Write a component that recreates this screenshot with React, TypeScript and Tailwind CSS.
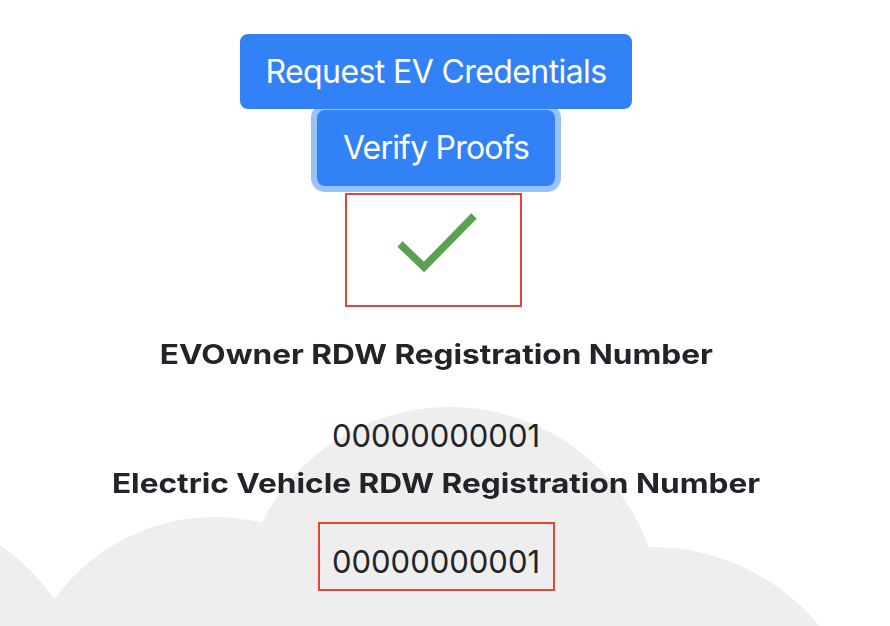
import React from 'react'

function Cloud() {
  return (
    <svg className="absolute inset-0 h-full w-full" viewBox="0 0 890 626" preserveAspectRatio="none" aria-hidden>
      <g fill="#eeeeee">
        <circle cx="-120" cy="720" r="212" />
        <circle cx="215" cy="715" r="198" />
        <circle cx="450" cy="618" r="211" />
        <circle cx="652" cy="764" r="217" />
      </g>
    </svg>
  )
}

function Check() {
  return (
    <svg width="173" height="110" viewBox="0 0 173 110" className="blur-[0.4px]">
      <polyline points="53,49 77,72 127,21" fill="none" stroke="#5aa152" strokeWidth="7.5" strokeLinejoin="miter" />
    </svg>
  )
}

export default function App() {
  return (
    <div className="relative h-[626px] w-[890px] overflow-hidden bg-white font-['Inter',sans-serif] text-[#212529]">
      <Cloud />
      <div className="relative flex flex-col items-center pr-[18px] pt-[34px]">
        <button className="relative z-10 h-[75px] rounded-[8px] border-2 border-[#3381f6] bg-[#3381f6] px-[24px] text-[32px] leading-[48px] tracking-[-0.6px] text-white">
          Request EV Credentials
        </button>
        <button className="mt-[1px] h-[76px] rounded-[8px] border-2 border-[#3381f6] bg-[#3381f6] px-[24px] text-[32px] leading-[48px] tracking-[-0.8px] text-white shadow-[0_0_0_6px_#99c1fa]">
          Verify Proofs
        </button>
        <div className="mr-[5px] mt-[7px] h-[114px] w-[177px] border-2 border-[#ea4331]">
          <Check />
        </div>
        <h5 className="mt-[32px] scale-x-[1.17] text-[27px] font-bold leading-[32px]">EVOwner RDW Registration Number</h5>
        <p className="mt-[41px] text-[31px] leading-[48px]">00000000001</p>
        <h5 className="mt-[8px] scale-x-[1.17] text-[27px] font-bold leading-[32px]">Electric Vehicle RDW Registration Number</h5>
        <div className="mt-[22px] h-[69px] w-[237px] border-2 border-[#ea4331] pt-[22px] text-center">
          <p className="text-[31px] leading-[32px]">00000000001</p>
        </div>
      </div>
    </div>
  )
}
